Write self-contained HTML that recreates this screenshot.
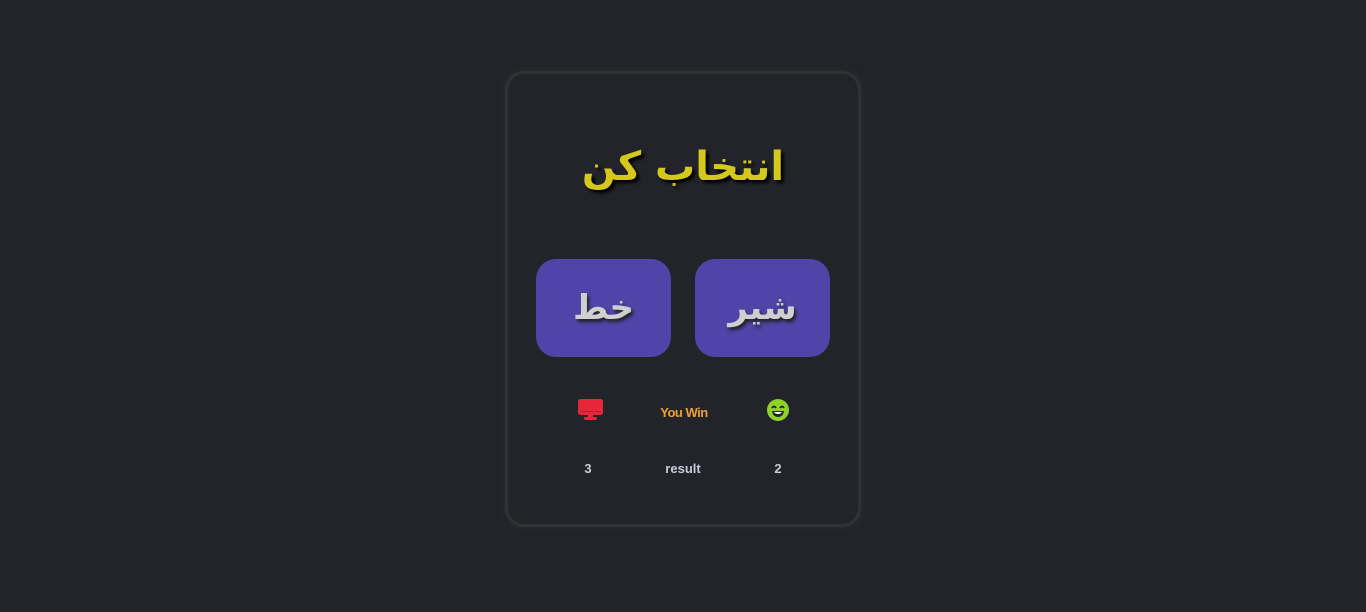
<!DOCTYPE html>
<html><head><meta charset="utf-8"><style>
html,body{margin:0;height:612px;background:#232429;overflow:hidden;font-family:"Liberation Sans","DejaVu Sans",sans-serif}
.card{position:absolute;left:508px;top:74px;width:350px;height:450px;box-sizing:border-box;border-radius:16px;background:#232429;box-shadow:0 0 0 3px #313236,0 0 8px 3px #2e2f33}
.title{position:absolute;left:0;right:0;top:144px;text-align:center;color:#d4c81d;font-size:40px;font-weight:bold;text-shadow:3px 3px 3px #000;direction:rtl;font-family:"DejaVu Sans",sans-serif;letter-spacing:-1px}
.btn{position:absolute;top:259px;width:135px;height:98px;border-radius:20px;background:#5044a8;color:#cfcfcf;font-size:34px;font-weight:bold;display:flex;align-items:center;justify-content:center;text-shadow:2px 3px 3px #222;font-family:"DejaVu Sans",sans-serif}
.t{position:absolute;font-weight:bold;font-size:13px;transform:translateX(-50%)}
</style></head><body>
<div class="card"></div>
<div class="title">انتخاب کن</div>
<div class="btn" style="left:536px">خط</div>
<div class="btn" style="left:695px">شیر</div>
<svg style="position:absolute;left:578px;top:399px" width="25" height="22" viewBox="0 0 25 22"><rect x="0" y="0" width="25" height="16" rx="2.5" fill="#e8253a"/><rect x="3" y="3" width="19" height="8" fill="#e8253a"/><rect x="10" y="16" width="5" height="2" fill="#e8253a"/><rect x="6" y="18" width="13" height="3" rx="1.5" fill="#e8253a"/><rect x="2" y="12" width="21" height="1" fill="#b81c2c"/></svg>
<svg style="position:absolute;left:767px;top:399px" width="22" height="22" viewBox="0 0 22 22"><circle cx="11" cy="11" r="11" fill="#8fd12a"/><path d="M5 9q2-3 4 0M13 9q2-3 4 0" stroke="#232429" stroke-width="1.8" fill="none"/><path d="M5 12h12q-1 6-6 6t-6-6z" fill="#232429"/><path d="M7 13h8q-1 2-4 2t-4-2z" fill="#fff"/></svg>
<div class="t" style="left:684px;top:405px;color:#f0a030;letter-spacing:-0.5px">You Win</div>
<div class="t" style="left:588px;top:461px;color:#c8ccd8">3</div>
<div class="t" style="left:683px;top:461px;color:#c8ccd8">result</div>
<div class="t" style="left:778px;top:461px;color:#c8ccd8">2</div>
</body></html>
